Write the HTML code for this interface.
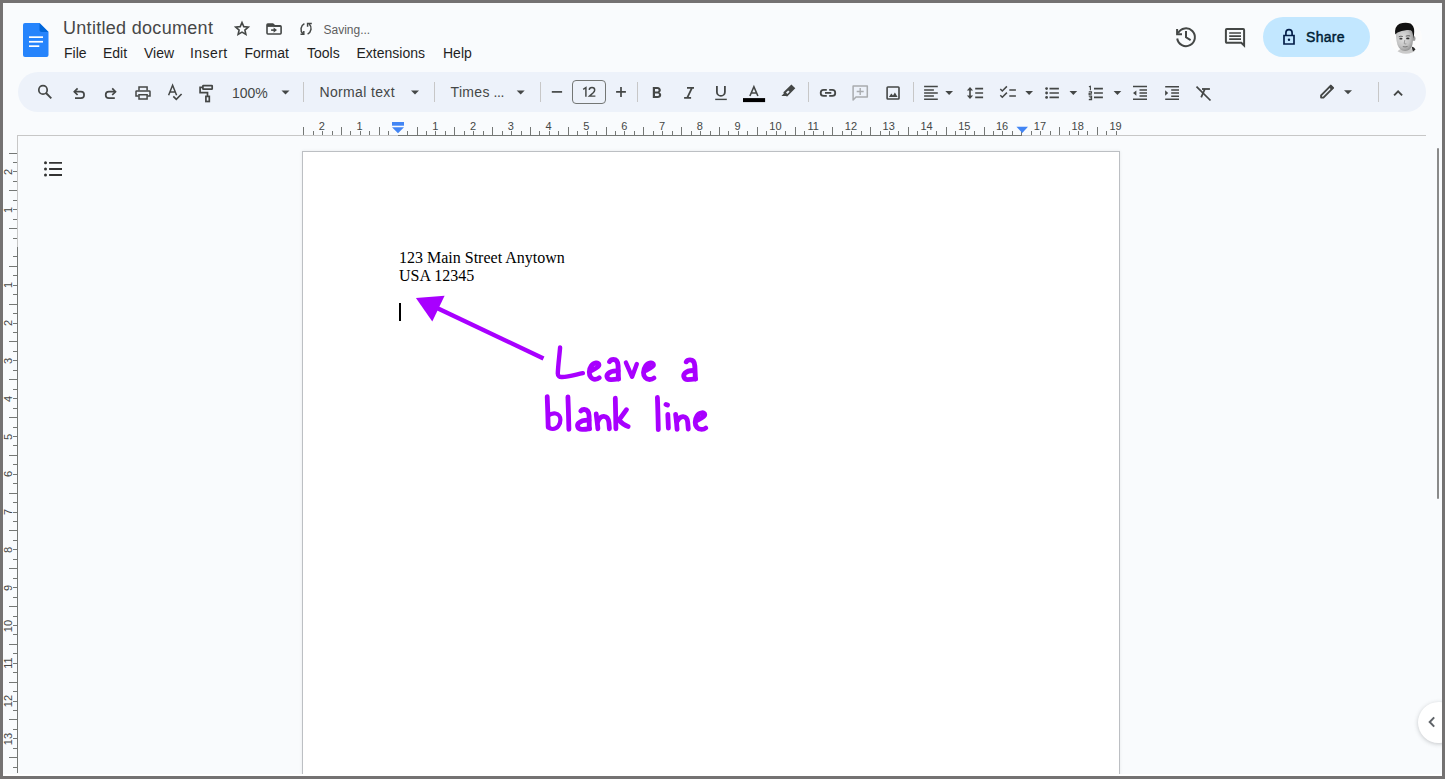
<!DOCTYPE html>
<html><head><meta charset="utf-8">
<style>
*{box-sizing:border-box}
html,body{margin:0;padding:0;width:1445px;height:779px;overflow:hidden;background:#f9fbfd}
#wrap{position:absolute;left:0;top:0;width:1445px;height:779px;overflow:hidden;background:#f9fbfd}
#frame{position:absolute;left:0;top:0;width:1445px;height:779px;border-style:solid;border-color:#747272;border-width:3px 3px 3px 3px;pointer-events:none}
.abs{position:absolute}
.t{position:absolute;font-family:"Liberation Sans",sans-serif;white-space:nowrap;line-height:1}
.menu{font-size:14px;color:#1f1f1f;top:46px}
svg{position:absolute;overflow:visible;left:0;top:0}
.sep{position:absolute;top:82px;width:1px;height:20px;background:#c7c7c7}
.rn{position:absolute;width:20px;text-align:center;font-family:"Liberation Sans",sans-serif;font-size:11px;line-height:1;color:#444746}
.vn{position:absolute;width:20px;height:12px;text-align:center;font-family:"Liberation Sans",sans-serif;font-size:11px;line-height:12px;color:#444746;transform:rotate(-90deg)}
.tk{position:absolute;width:1px;background:#747775}
.tkv{position:absolute;height:1px;background:#747775}
</style></head>
<body>
<div id="wrap">

<!-- docs logo -->
<svg width="1445" height="779" style="left:0;top:0">
  <g transform="translate(23,23)">
  <path d="M2 0 H16.5 L25.5 9 V32 a2 2 0 0 1 -2 2 H2 a2 2 0 0 1 -2 -2 V2 a2 2 0 0 1 2 -2z" fill="#2684fc"/>
  <path d="M16.5 0 L25.5 9 H18.5 a2 2 0 0 1 -2 -2z" fill="#0066da"/>
  <rect x="6" y="13.3" width="14" height="1.7" fill="#fff"/>
  <rect x="6" y="17.9" width="14" height="1.7" fill="#fff"/>
  <rect x="6" y="22.3" width="10.3" height="1.7" fill="#fff"/>
  </g>

  <!-- star -->
  <path d="M242.00 22.50 L243.78 26.64 L248.28 27.06 L244.89 30.04 L245.88 34.44 L242.00 32.14 L238.12 34.44 L239.11 30.04 L235.72 27.06 L240.22 26.64Z" fill="none" stroke="#444746" stroke-width="1.6" stroke-linejoin="miter"/>
  <!-- folder move -->
  <path d="M267 24.9 a0.8 0.8 0 0 1 0.8 -0.8 H272.8 L274.8 25.9 H280.2 a0.9 0.9 0 0 1 0.9 0.9 V33.1 a0.9 0.9 0 0 1 -0.9 0.9 H267.9 a0.9 0.9 0 0 1 -0.9 -0.9 Z" fill="none" stroke="#444746" stroke-width="1.6"/>
  <path d="M267 26.3 H281" stroke="#444746" stroke-width="1.2"/><path d="M267 24 H272.7 L274.8 26.1 H267Z" fill="#444746"/>
  <path d="M271.1 30.1 H274.3" stroke="#444746" stroke-width="1.6"/>
  <path d="M273.6 27.5 L277 30.1 L273.6 32.7 Z" fill="#444746"/>
  <!-- sync -->
  <g fill="none" stroke="#444746" stroke-width="1.5">
  <path d="M304.4 23.6 A6.3 6.3 0 0 0 302.9 33.7"/>
  <path d="M300.5 34.3 H303.8 V31.1"/>
  <path d="M307.6 34.1 A6.3 6.3 0 0 0 309.2 24"/>
  <path d="M311.8 23.5 H307.6 V26.7"/>
  </g>

  <!-- history -->
  <path d="M1178.1 33.1 A8.9 8.9 0 1 1 1177.2 38.5" fill="none" stroke="#444746" stroke-width="2"/>
  <path d="M1177.1 29 V34.3 H1182" fill="none" stroke="#444746" stroke-width="2"/>
  <path d="M1186 30.9 V37.3 L1190.6 40.1" fill="none" stroke="#444746" stroke-width="2"/>
  <!-- comments -->
  <path d="M1226.8 29.1 H1243.2 a0.9 0.9 0 0 1 0.9 0.9 V45.4 L1241.3 42.7 H1226.8 a0.9 0.9 0 0 1 -0.9 -0.9 V30 a0.9 0.9 0 0 1 0.9 -0.9z" fill="none" stroke="#444746" stroke-width="2"/>
  <path d="M1245 43.6 V47.4 L1241.3 43.6Z" fill="#444746"/>
  <path d="M1229.2 33 H1241 M1229.2 36.1 H1241 M1229.2 39.1 H1241" stroke="#444746" stroke-width="1.7"/>

</svg>

<div class="t" style="left:63px;top:19px;font-size:18px;letter-spacing:0.3px;color:#474747">Untitled document</div>

<div class="t menu" style="left:64px">File</div>
<div class="t menu" style="left:103px">Edit</div>
<div class="t menu" style="left:144px">View</div>
<div class="t menu" style="left:190px;letter-spacing:0.45px">Insert</div>
<div class="t menu" style="left:244.5px">Format</div>
<div class="t menu" style="left:307px">Tools</div>
<div class="t menu" style="left:356.5px">Extensions</div>
<div class="t menu" style="left:443px">Help</div>

<div class="t" style="left:323.5px;top:24px;font-size:12px;color:#5e5e5e">Saving...</div>

<!-- share button -->
<div class="abs" style="left:1263px;top:17px;width:107px;height:40px;border-radius:20px;background:#c2e7ff"></div>
<div class="t" style="left:1306px;top:30px;font-size:14px;color:#001d35;letter-spacing:0.3px;-webkit-text-stroke:0.45px #001d35">Share</div>

<svg width="1445" height="779">
  <!-- lock -->
  <path d="M1284 35.5 H1294 V44 H1284 Z" fill="none" stroke="#041e49" stroke-width="1.7"/>
  <path d="M1285.9 35.5 V32.8 A3.1 3.1 0 0 1 1292.1 32.8 V35.5" fill="none" stroke="#041e49" stroke-width="1.7"/>
  <circle cx="1289" cy="39.7" r="1.2" fill="#041e49"/>
</svg>
<!-- avatar -->
<svg width="1445" height="779">
  <defs><clipPath id="av"><circle cx="1406" cy="37.8" r="16"/></clipPath>
  <radialGradient id="fg" cx="0.42" cy="0.4" r="0.65"><stop offset="0" stop-color="#e2e2e2"/><stop offset="0.6" stop-color="#c4c4c4"/><stop offset="1" stop-color="#8f8f8f"/></radialGradient></defs>
  <circle cx="1406" cy="37.8" r="16" fill="#fcfcfc"/>
  <g clip-path="url(#av)">
    <path d="M1395 56 Q1397 50 1402 48.5 L1410 48 Q1415 48.5 1417 56Z" fill="#c9c9c9"/>
    <path d="M1411.5 46.5 Q1414.5 47 1415.5 49.5 L1413 51.5Z" fill="#2a2a2a"/>
    <ellipse cx="1414" cy="38.5" rx="1.5" ry="2.5" fill="#9a9a9a"/>
    <path d="M1396 32 Q1395.8 43 1398.8 47.5 Q1401.8 51.3 1405.5 51 Q1409.8 50.6 1411.8 46.5 Q1413.6 41.5 1413.2 31 Q1405 28 1396 32Z" fill="url(#fg)"/>
    <path d="M1395.2 34.5 Q1394.2 26.5 1399.5 23.8 Q1405.5 21.6 1410.5 23.6 Q1414.3 26 1414.2 31.5 L1413.8 38.5 Q1413 34 1412 31.2 Q1410.5 29.5 1407 30 Q1401 30.8 1397.5 32.5 Q1396.2 33.3 1395.2 34.5Z" fill="#121212"/>
    <path d="M1398.8 36.8 Q1400.8 35.8 1402.8 36.5 M1405.8 36.2 Q1408 35.3 1410.2 36" stroke="#555" stroke-width="0.9" fill="none"/>
    <ellipse cx="1400.9" cy="38.7" rx="1.6" ry="0.9" fill="#3d3d3d"/>
    <ellipse cx="1407.8" cy="38.4" rx="1.7" ry="0.95" fill="#2f2f2f"/>
    <path d="M1404.8 40 L1404.2 43.5 Q1405 44.3 1406.3 43.8" stroke="#8a8a8a" stroke-width="0.8" fill="none"/>
    <path d="M1402.8 46.6 Q1405 47.3 1407.5 46.5" stroke="#6e6e6e" stroke-width="0.9" fill="none"/>
  </g>
</svg>

<!-- toolbar -->
<div class="abs" style="left:18px;top:72px;width:1408px;height:40px;border-radius:20px;background:#edf2fa"></div>
<div class="t" style="left:232px;top:86px;font-size:14px;color:#444746">100%</div>
<div class="t" style="left:319.5px;top:85px;font-size:14px;color:#444746;letter-spacing:0.35px">Normal text</div>
<div class="t" style="left:450.5px;top:85px;font-size:14px;color:#444746;letter-spacing:0.35px">Times<span style="letter-spacing:-0.3px"> ...</span></div>
<div class="abs" style="left:572px;top:80px;width:34px;height:24px;border:1px solid #747775;border-radius:4px"></div>
<svg width="1445" height="779"><path d="M583.2 89.3 L585.9 87.6 V96.8 M589.2 89.9 C589.3 88.3 590.4 87.5 592 87.5 C593.6 87.5 594.7 88.5 594.7 90 C594.7 91.1 594.1 91.9 593.2 92.8 L589.5 96.1 H595.4" fill="none" stroke="#444746" stroke-width="1.45"/></svg>
<div class="sep" style="left:303px"></div>
<div class="sep" style="left:434px"></div>
<div class="sep" style="left:540px"></div>
<div class="sep" style="left:637px"></div>
<div class="sep" style="left:808px"></div>
<div class="sep" style="left:913px"></div>
<div class="sep" style="left:1378px"></div>

<svg width="1445" height="779">
 <g fill="none" stroke="#444746" stroke-width="1.7">
  <!-- search -->
  <circle cx="43" cy="89.9" r="4.2"/>
  <path d="M46 93 L51.3 98.3" stroke-width="1.9"/>
  <!-- undo -->
  <path d="M75 98.1 H80.9 A3.2 3.2 0 0 0 80.9 91.7 H74.5"/>
  <path d="M77.6 88.4 L74.3 91.7 L77.6 95"/>
  <!-- redo -->
  <path d="M114.8 98.1 H108.9 A3.2 3.2 0 0 1 108.9 91.7 H115.3"/>
  <path d="M112.2 88.4 L115.5 91.7 L112.2 95"/>
  <!-- print -->
  <path d="M139 90.4 V87 H147.1 V90.4" stroke-width="1.5"/>
  <path d="M138.6 95.9 H136 V91.6 a0.7 0.7 0 0 1 0.7 -0.7 H149.3 a0.7 0.7 0 0 1 0.7 0.7 V95.9 H147.5" stroke-width="1.5"/>
  <path d="M139 94.7 H147.1 V99 H139 Z" stroke-width="1.5"/>
  <!-- spellcheck -->
  <path d="M168.6 95.2 L172.6 85.2 L176.6 95.2 M169.9 92 H175.3" stroke-width="1.5"/>
  <path d="M173.3 96.4 L176.3 99.4 L181.6 94" stroke-width="1.6"/>
  <!-- paint format -->
  <rect x="202.9" y="85.6" width="9.3" height="3.6" rx="0.5"/>
  <path d="M202.9 87.4 H200.1 V92.6 H207.5 V96.4"/>
  <rect x="205.9" y="96.4" width="3.4" height="5.1"/>
  <!-- dropdown arrows -->
 </g>
 <g fill="#444746">
  <path d="M281.5 90.5 H289.5 L285.5 94.5Z"/>
  <path d="M411 90.5 H419 L415 94.5Z"/>
  <path d="M516.7 90.5 H524.7 L520.7 94.5Z"/>
  <path d="M945.3 90.9 H953 L949.15 94.9Z"/>
  <path d="M1025.3 90.9 H1033 L1029.15 94.9Z"/>
  <path d="M1069.5 90.9 H1077.2 L1073.35 94.9Z"/>
  <path d="M1113.6 90.9 H1121.3 L1117.45 94.9Z"/>
  <path d="M1344 90.2 H1352 L1348 94.2Z"/>
 </g>
 <g fill="none" stroke="#444746" stroke-width="1.7">
  <!-- minus plus -->
  <path d="M551.8 91.9 H562.1"/>
  <path d="M616.1 91.9 H625.9 M621 87 V97"/>
  <!-- italic -->
  <path d="M687 87.9 H694 M684.1 97.9 H691.1 M692 87.9 L687.2 97.9" stroke-width="1.8"/>
  <!-- underline -->
  <path d="M716.9 86 V91.9 A4 4 0 0 0 724.9 91.9 V86" stroke-width="1.8"/>
  <path d="M715.2 99.4 H726.8" stroke-width="1.4"/>
  <!-- A text color -->
  <path d="M749.9 96 L753.9 86.8 L757.9 96 M751.3 93 H756.5" stroke-width="1.6"/>
 </g>
 <!-- bold B -->
 <path fill="#444746" d="M652.8 87 H657.3 C659.7 87 660.8 88.4 660.8 90.1 C660.8 91.1 660.3 92 659.4 92.4 C660.6 92.8 661.2 93.9 661.2 95.1 C661.2 97 659.8 98.1 657.6 98.1 H652.8 Z M655 89 V91.6 H657 C658 91.6 658.6 91.1 658.6 90.3 C658.6 89.5 658 89 657.1 89 Z M655 93.5 V96.1 H657.3 C658.4 96.1 659 95.5 659 94.8 C659 94 658.4 93.5 657.3 93.5 Z"/>
 <!-- color bar -->
 <rect x="743" y="98.1" width="22.1" height="4" fill="#000"/>
 <!-- highlighter -->
 <path fill="#444746" d="M791.4 84.4 L795.3 88.3 L787.2 96.4 L785.8 96 L781.4 96 L783.8 93.6 L783.4 92.3 Z"/>
 <path fill="#edf2fa" d="M786 92.6 L788.2 90.4 L789.6 91.8 L787.4 94 Z"/>
 <!-- link -->
 <g fill="none" stroke="#444746" stroke-width="1.8">
  <path d="M826.8 89.95 H823.65 A2.95 2.95 0 0 0 823.65 95.85 H826.8"/>
  <path d="M829.2 89.95 H832.3 A2.95 2.95 0 0 1 832.3 95.85 H829.2"/>
  <path d="M825 92.9 H831.3"/>
 </g>
 <!-- add comment disabled -->
 <g fill="none" stroke="#a9acaf" stroke-width="1.5">
  <path d="M853.1 86 H867.3 V97 H856 L853.1 100 Z" stroke-linejoin="round"/>
  <path d="M856.7 91.5 H863.7 M860.2 88 V95" stroke-width="1.4"/>
 </g>
 <!-- image -->
 <g fill="none" stroke="#444746" stroke-width="1.8">
  <rect x="887.1" y="87" width="11.9" height="12" rx="0.8" stroke-width="1.6"/>
 </g>
 <path fill="#444746" d="M888.9 96.9 L891.3 93.4 L893 95.4 L894.9 92.6 L897.6 96.9 Z"/>
 <g fill="none" stroke="#444746" stroke-width="1.5">
  <!-- align left -->
  <path d="M924.1 86.6 H937.8 M924.1 89.9 H933.9 M924.1 93 H937.8 M924.1 96.1 H933.9 M924.1 99.3 H937.8"/>
  <!-- line spacing -->
  <path d="M970 88.5 V97.5" stroke-width="1.6"/>
  <path d="M975.2 88.6 H983.1 M975.2 93 H983.1 M975.2 97.4 H983.1" stroke-width="1.6"/>
  <!-- checklist -->
  <path d="M1000.3 89 L1002.3 91 L1006.9 86.4 M1000.3 95.2 L1002.3 97.2 L1006.9 92.6" stroke-width="1.5"/>
  <path d="M1009.3 89.9 H1015.9 M1009.3 95.9 H1015.9" stroke-width="1.5"/>
  <!-- bullets -->
  <path d="M1049.5 88.6 H1058.9 M1049.5 93 H1058.9 M1049.5 97.4 H1058.9" stroke-width="1.6"/>
  <!-- numbered -->
  <path d="M1094 88.6 H1102.9 M1094 93 H1102.9 M1094 97.4 H1102.9" stroke-width="1.6"/>
  <path d="M1088.9 86.8 L1090.4 86.2 V90.3 M1088.8 91.7 H1091.5 V93.2 H1089.1 V94.8 H1091.8 M1088.8 96.2 H1091.6 V99.6 H1088.8 M1089.6 97.9 H1091.6" stroke-width="1.1"/>
  <!-- decrease indent -->
  <path d="M1133 86.6 H1147 M1139.5 89.9 H1147 M1139.5 93 H1147 M1139.5 96.1 H1147 M1133 99.3 H1147"/>
  <!-- increase indent -->
  <path d="M1165.2 86.7 H1179 M1171.2 89.9 H1179 M1171.2 93 H1179 M1171.2 96.2 H1179 M1165.2 99.2 H1179"/>
  <!-- clear formatting -->
  <path d="M1196.5 86.6 L1210.5 100.5" stroke-width="1.7"/>
  <path d="M1202 89 H1209.9" stroke-width="1.8"/>
  <path d="M1204.8 89.2 L1201.2 97.4" stroke-width="1.8"/>
  <!-- chevron up -->
  <path d="M1394.1 95.3 L1398.1 91.3 L1402.1 95.3" stroke-width="1.9"/>
 </g>
 <g fill="#444746">
  <path d="M966.9 90.5 L970 87 L973.1 90.5Z M966.9 95.5 L970 99 L973.1 95.5Z"/>
  <circle cx="1046.6" cy="88.6" r="1.4"/><circle cx="1046.6" cy="93" r="1.4"/><circle cx="1046.6" cy="97.4" r="1.4"/>
  <path d="M1136.4 90.4 V95.8 L1133 93.1Z"/>
  <path d="M1165.1 90.2 V95.7 L1168.2 92.95Z"/>
  <!-- pencil -->
  <path d="M1330.8 85.6 L1333.1 87.9 L1323.4 97.6 L1321.1 97.6 L1321.1 95.3 Z" fill="none" stroke="#444746" stroke-width="1.9" stroke-linejoin="round"/>
  <path d="M1330.8 84.9 L1333.8 87.9 L1331.6 90.1 L1328.6 87.1Z" fill="#444746"/>
 </g>
 
</svg>

<!-- ruler lines -->
<div class="abs" style="left:17px;top:135px;width:1409px;height:1px;background:#c7c7c7"></div>
<div class="abs" style="left:398px;top:135px;width:624px;height:1px;background:#747775"></div>
<div class="abs" style="left:17px;top:135px;width:1px;height:638px;background:#c7c7c7"></div>
<div class="abs" style="left:17px;top:247px;width:1px;height:526px;background:#747775"></div>

<div class="tk" style="left:303px;top:127px;height:8px"></div>
<div class="tk" style="left:313px;top:131px;height:4px"></div>
<div class="rn" style="left:311.8px;top:121px">2</div>
<div class="tk" style="left:322px;top:131px;height:4px"></div>
<div class="tk" style="left:332px;top:131px;height:4px"></div>
<div class="tk" style="left:341px;top:127px;height:8px"></div>
<div class="tk" style="left:350px;top:131px;height:4px"></div>
<div class="rn" style="left:349.6px;top:121px">1</div>
<div class="tk" style="left:360px;top:131px;height:4px"></div>
<div class="tk" style="left:369px;top:131px;height:4px"></div>
<div class="tk" style="left:379px;top:127px;height:8px"></div>
<div class="tk" style="left:388px;top:131px;height:4px"></div>
<div class="tk" style="left:407px;top:131px;height:4px"></div>
<div class="tk" style="left:417px;top:127px;height:8px"></div>
<div class="tk" style="left:426px;top:131px;height:4px"></div>
<div class="rn" style="left:425.2px;top:121px">1</div>
<div class="tk" style="left:435px;top:131px;height:4px"></div>
<div class="tk" style="left:445px;top:131px;height:4px"></div>
<div class="tk" style="left:454px;top:127px;height:8px"></div>
<div class="tk" style="left:464px;top:131px;height:4px"></div>
<div class="rn" style="left:463.0px;top:121px">2</div>
<div class="tk" style="left:473px;top:131px;height:4px"></div>
<div class="tk" style="left:483px;top:131px;height:4px"></div>
<div class="tk" style="left:492px;top:127px;height:8px"></div>
<div class="tk" style="left:502px;top:131px;height:4px"></div>
<div class="rn" style="left:500.8px;top:121px">3</div>
<div class="tk" style="left:511px;top:131px;height:4px"></div>
<div class="tk" style="left:521px;top:131px;height:4px"></div>
<div class="tk" style="left:530px;top:127px;height:8px"></div>
<div class="tk" style="left:539px;top:131px;height:4px"></div>
<div class="rn" style="left:538.6px;top:121px">4</div>
<div class="tk" style="left:549px;top:131px;height:4px"></div>
<div class="tk" style="left:558px;top:131px;height:4px"></div>
<div class="tk" style="left:568px;top:127px;height:8px"></div>
<div class="tk" style="left:577px;top:131px;height:4px"></div>
<div class="rn" style="left:576.4px;top:121px">5</div>
<div class="tk" style="left:587px;top:131px;height:4px"></div>
<div class="tk" style="left:596px;top:131px;height:4px"></div>
<div class="tk" style="left:606px;top:127px;height:8px"></div>
<div class="tk" style="left:615px;top:131px;height:4px"></div>
<div class="rn" style="left:614.2px;top:121px">6</div>
<div class="tk" style="left:624px;top:131px;height:4px"></div>
<div class="tk" style="left:634px;top:131px;height:4px"></div>
<div class="tk" style="left:643px;top:127px;height:8px"></div>
<div class="tk" style="left:653px;top:131px;height:4px"></div>
<div class="rn" style="left:652.0px;top:121px">7</div>
<div class="tk" style="left:662px;top:131px;height:4px"></div>
<div class="tk" style="left:672px;top:131px;height:4px"></div>
<div class="tk" style="left:681px;top:127px;height:8px"></div>
<div class="tk" style="left:691px;top:131px;height:4px"></div>
<div class="rn" style="left:689.8px;top:121px">8</div>
<div class="tk" style="left:700px;top:131px;height:4px"></div>
<div class="tk" style="left:710px;top:131px;height:4px"></div>
<div class="tk" style="left:719px;top:127px;height:8px"></div>
<div class="tk" style="left:728px;top:131px;height:4px"></div>
<div class="rn" style="left:727.6px;top:121px">9</div>
<div class="tk" style="left:738px;top:131px;height:4px"></div>
<div class="tk" style="left:747px;top:131px;height:4px"></div>
<div class="tk" style="left:757px;top:127px;height:8px"></div>
<div class="tk" style="left:766px;top:131px;height:4px"></div>
<div class="rn" style="left:765.4px;top:121px">10</div>
<div class="tk" style="left:776px;top:131px;height:4px"></div>
<div class="tk" style="left:785px;top:131px;height:4px"></div>
<div class="tk" style="left:795px;top:127px;height:8px"></div>
<div class="tk" style="left:804px;top:131px;height:4px"></div>
<div class="rn" style="left:803.1px;top:121px">11</div>
<div class="tk" style="left:813px;top:131px;height:4px"></div>
<div class="tk" style="left:823px;top:131px;height:4px"></div>
<div class="tk" style="left:832px;top:127px;height:8px"></div>
<div class="tk" style="left:842px;top:131px;height:4px"></div>
<div class="rn" style="left:840.9px;top:121px">12</div>
<div class="tk" style="left:851px;top:131px;height:4px"></div>
<div class="tk" style="left:861px;top:131px;height:4px"></div>
<div class="tk" style="left:870px;top:127px;height:8px"></div>
<div class="tk" style="left:880px;top:131px;height:4px"></div>
<div class="rn" style="left:878.7px;top:121px">13</div>
<div class="tk" style="left:889px;top:131px;height:4px"></div>
<div class="tk" style="left:898px;top:131px;height:4px"></div>
<div class="tk" style="left:908px;top:127px;height:8px"></div>
<div class="tk" style="left:917px;top:131px;height:4px"></div>
<div class="rn" style="left:916.5px;top:121px">14</div>
<div class="tk" style="left:927px;top:131px;height:4px"></div>
<div class="tk" style="left:936px;top:131px;height:4px"></div>
<div class="tk" style="left:946px;top:127px;height:8px"></div>
<div class="tk" style="left:955px;top:131px;height:4px"></div>
<div class="rn" style="left:954.3px;top:121px">15</div>
<div class="tk" style="left:965px;top:131px;height:4px"></div>
<div class="tk" style="left:974px;top:131px;height:4px"></div>
<div class="tk" style="left:984px;top:127px;height:8px"></div>
<div class="tk" style="left:993px;top:131px;height:4px"></div>
<div class="rn" style="left:992.1px;top:121px">16</div>
<div class="tk" style="left:1002px;top:131px;height:4px"></div>
<div class="tk" style="left:1012px;top:131px;height:4px"></div>
<div class="tk" style="left:1021px;top:127px;height:8px"></div>
<div class="tk" style="left:1031px;top:131px;height:4px"></div>
<div class="rn" style="left:1029.9px;top:121px">17</div>
<div class="tk" style="left:1040px;top:131px;height:4px"></div>
<div class="tk" style="left:1050px;top:131px;height:4px"></div>
<div class="tk" style="left:1059px;top:127px;height:8px"></div>
<div class="tk" style="left:1069px;top:131px;height:4px"></div>
<div class="rn" style="left:1067.7px;top:121px">18</div>
<div class="tk" style="left:1078px;top:131px;height:4px"></div>
<div class="tk" style="left:1087px;top:131px;height:4px"></div>
<div class="tk" style="left:1097px;top:127px;height:8px"></div>
<div class="tk" style="left:1106px;top:131px;height:4px"></div>
<div class="rn" style="left:1105.5px;top:121px">19</div>
<div class="tk" style="left:1116px;top:131px;height:4px"></div>
<div class="tkv" style="left:9px;top:153px;width:8px"></div>
<div class="tkv" style="left:13px;top:162px;width:4px"></div>
<div class="vn" style="left:-2px;top:165.9px">2</div>
<div class="tkv" style="left:13px;top:171px;width:4px"></div>
<div class="tkv" style="left:13px;top:181px;width:4px"></div>
<div class="tkv" style="left:9px;top:190px;width:8px"></div>
<div class="tkv" style="left:13px;top:200px;width:4px"></div>
<div class="vn" style="left:-2px;top:203.7px">1</div>
<div class="tkv" style="left:13px;top:209px;width:4px"></div>
<div class="tkv" style="left:13px;top:219px;width:4px"></div>
<div class="tkv" style="left:9px;top:228px;width:8px"></div>
<div class="tkv" style="left:13px;top:238px;width:4px"></div>
<div class="tkv" style="left:13px;top:256px;width:4px"></div>
<div class="tkv" style="left:9px;top:266px;width:8px"></div>
<div class="tkv" style="left:13px;top:275px;width:4px"></div>
<div class="vn" style="left:-2px;top:279.3px">1</div>
<div class="tkv" style="left:13px;top:285px;width:4px"></div>
<div class="tkv" style="left:13px;top:294px;width:4px"></div>
<div class="tkv" style="left:9px;top:304px;width:8px"></div>
<div class="tkv" style="left:13px;top:313px;width:4px"></div>
<div class="vn" style="left:-2px;top:317.1px">2</div>
<div class="tkv" style="left:13px;top:323px;width:4px"></div>
<div class="tkv" style="left:13px;top:332px;width:4px"></div>
<div class="tkv" style="left:9px;top:341px;width:8px"></div>
<div class="tkv" style="left:13px;top:351px;width:4px"></div>
<div class="vn" style="left:-2px;top:354.9px">3</div>
<div class="tkv" style="left:13px;top:360px;width:4px"></div>
<div class="tkv" style="left:13px;top:370px;width:4px"></div>
<div class="tkv" style="left:9px;top:379px;width:8px"></div>
<div class="tkv" style="left:13px;top:389px;width:4px"></div>
<div class="vn" style="left:-2px;top:392.7px">4</div>
<div class="tkv" style="left:13px;top:398px;width:4px"></div>
<div class="tkv" style="left:13px;top:408px;width:4px"></div>
<div class="tkv" style="left:9px;top:417px;width:8px"></div>
<div class="tkv" style="left:13px;top:427px;width:4px"></div>
<div class="vn" style="left:-2px;top:430.5px">5</div>
<div class="tkv" style="left:13px;top:436px;width:4px"></div>
<div class="tkv" style="left:13px;top:445px;width:4px"></div>
<div class="tkv" style="left:9px;top:455px;width:8px"></div>
<div class="tkv" style="left:13px;top:464px;width:4px"></div>
<div class="vn" style="left:-2px;top:468.3px">6</div>
<div class="tkv" style="left:13px;top:474px;width:4px"></div>
<div class="tkv" style="left:13px;top:483px;width:4px"></div>
<div class="tkv" style="left:9px;top:493px;width:8px"></div>
<div class="tkv" style="left:13px;top:502px;width:4px"></div>
<div class="vn" style="left:-2px;top:506.1px">7</div>
<div class="tkv" style="left:13px;top:512px;width:4px"></div>
<div class="tkv" style="left:13px;top:521px;width:4px"></div>
<div class="tkv" style="left:9px;top:530px;width:8px"></div>
<div class="tkv" style="left:13px;top:540px;width:4px"></div>
<div class="vn" style="left:-2px;top:543.9px">8</div>
<div class="tkv" style="left:13px;top:549px;width:4px"></div>
<div class="tkv" style="left:13px;top:559px;width:4px"></div>
<div class="tkv" style="left:9px;top:568px;width:8px"></div>
<div class="tkv" style="left:13px;top:578px;width:4px"></div>
<div class="vn" style="left:-2px;top:581.7px">9</div>
<div class="tkv" style="left:13px;top:587px;width:4px"></div>
<div class="tkv" style="left:13px;top:597px;width:4px"></div>
<div class="tkv" style="left:9px;top:606px;width:8px"></div>
<div class="tkv" style="left:13px;top:616px;width:4px"></div>
<div class="vn" style="left:-2px;top:619.5px">10</div>
<div class="tkv" style="left:13px;top:625px;width:4px"></div>
<div class="tkv" style="left:13px;top:634px;width:4px"></div>
<div class="tkv" style="left:9px;top:644px;width:8px"></div>
<div class="tkv" style="left:13px;top:653px;width:4px"></div>
<div class="vn" style="left:-2px;top:657.2px">11</div>
<div class="tkv" style="left:13px;top:663px;width:4px"></div>
<div class="tkv" style="left:13px;top:672px;width:4px"></div>
<div class="tkv" style="left:9px;top:682px;width:8px"></div>
<div class="tkv" style="left:13px;top:691px;width:4px"></div>
<div class="vn" style="left:-2px;top:695.0px">12</div>
<div class="tkv" style="left:13px;top:701px;width:4px"></div>
<div class="tkv" style="left:13px;top:710px;width:4px"></div>
<div class="tkv" style="left:9px;top:719px;width:8px"></div>
<div class="tkv" style="left:13px;top:729px;width:4px"></div>
<div class="vn" style="left:-2px;top:732.8px">13</div>
<div class="tkv" style="left:13px;top:738px;width:4px"></div>
<div class="tkv" style="left:13px;top:748px;width:4px"></div>
<div class="tkv" style="left:9px;top:757px;width:8px"></div>
<div class="tkv" style="left:13px;top:767px;width:4px"></div>

<!-- indent markers -->
<svg width="1445" height="779">
  <rect x="392" y="122" width="12" height="3.7" fill="#4285f4"/>
  <path d="M392 127.2 H404 L398 133.3Z" fill="#4285f4"/>
  <path d="M1016.5 126.8 H1028 L1022.25 133Z" fill="#4285f4"/>
</svg>

<!-- outline icon -->
<svg width="1445" height="779">
  <g fill="#333"><circle cx="45.5" cy="162.8" r="1.5"/><circle cx="45.5" cy="169" r="1.5"/><circle cx="45.5" cy="175" r="1.5"/></g>
  <path d="M49.1 162.8 H62 M49.1 169 H62 M49.1 175 H62" stroke="#333" stroke-width="1.8"/>
</svg>

<!-- page -->
<div class="abs" style="left:302px;top:151px;width:818px;height:700px;background:#fff;border:1px solid #bcbfc3;box-shadow:0 0 3px rgba(60,64,67,0.10)"></div>

<div class="abs" style="left:399px;top:249px;font-family:'Liberation Serif',serif;font-size:16px;line-height:18px;color:#000;white-space:nowrap">123 Main Street Anytown<br>USA 12345</div>
<div class="abs" style="left:399px;top:303px;width:2px;height:18px;background:#000"></div>

<!-- annotation -->
<svg width="1445" height="779">
 <path d="M437 308 L543.5 358.5" stroke="#a800ff" stroke-width="4.4" fill="none"/>
 <path d="M415.9 297.9 L444.6 295.7 L432.3 321.6 Z" fill="#a800ff"/>
 <g fill="none" stroke="#a800ff" stroke-width="4.4" stroke-linecap="round" stroke-linejoin="round">
  <path d="M560.1 347.5 C559.5 355 558 366 557.8 373.5 C557.8 376 559.5 377.2 562 377 C569 376.5 576 374.5 582.9 373.2"/>
  <path d="M591.5 370.5 C594.5 369 599 367 599 365 C599 363.2 597.5 362.8 596 363 C592 363.5 589.5 367.5 589.3 372 C589.2 376 591.5 379.3 595 379.3 C596.8 379.3 598.3 378.7 599.3 377.8" stroke-width="4.8"/>
  <path d="M609.6 361.6 C610.5 360 612 359.5 613.5 359.5 C616.5 359.5 617.9 362.3 618.1 366 L618.4 379" stroke-width="4.9"/>
  <path d="M618 371 C614.2 370.7 610.3 371.3 608 373.7 C606 375.7 607 379.4 610.7 379.6 C613 379.7 616 379.3 618.4 378.9" stroke-width="4.9"/>
  <path d="M625.9 362.6 L632.1 376.8 L636.8 364.1"/>
  <path d="M645.5 370.5 C648.5 369 653.5 367 653.5 365 C653.5 363.3 652 362.8 650.5 363 C646.5 363.5 643.6 368 643.5 372.5 C643.4 376.5 646 379.5 649.5 379.5 C651.5 379.5 653 378.8 654 378" stroke-width="4.8"/>
  <path d="M686.3 361.8 C687 360.5 688.5 359.9 690 359.9 C693 359.9 694.6 362.5 694.8 366 L695.4 379" stroke-width="4.9"/>
  <path d="M694.5 370.6 C691 370.4 687.2 371 684.8 373.3 C682.8 375.5 683.8 379.6 687.6 379.6 C690 379.6 693 379.2 695.4 378.8" stroke-width="4.9"/>

  <path d="M547.2 396.6 C547.6 406 548 418 548.2 427.3" stroke-width="4.8"/>
  <path d="M548.5 415.5 C550.5 413.8 553 413.2 555.5 413.5 C558.7 414 560.4 416.7 560.4 419.7 C560.4 424.2 557.7 428.9 552.7 429 C550.7 429 549.2 428.2 548.5 426.7" stroke-width="4.2"/>
  <path d="M567.9 396.9 C568.3 407 568.7 420 568.9 429.4" stroke-width="4.8"/>
  <path d="M580.8 411 C581.8 409.8 583 409.4 584.3 409.5 C587.5 409.8 589 412.5 589.1 416 L589.3 428.8" stroke-width="4.8"/>
  <path d="M589 420.2 C585.5 420 581.5 420.5 578.7 423 C576.5 425.3 577.5 429.3 582.1 429.4 C584.5 429.5 587.5 429 589.5 428.6" stroke-width="4.8"/>
  <path d="M596.2 414 C596.8 419 597.5 424 597.9 428.8" stroke-width="4.8"/>
  <path d="M597.8 421.5 C599 418.5 601.5 416.2 603.8 416.3 C606.5 416.5 608.5 419 608.9 422.5 L609.4 428.8" stroke-width="4.8"/>
  <path d="M615.3 398.2 C615.5 408 615.8 419 615.9 428.8" stroke-width="4.8"/>
  <path d="M626.5 409.7 L618.9 420.2 C621 422.5 624.5 425.5 628.1 426.5" stroke-width="4.8"/>
  <path d="M657.4 397.5 C657.8 407 658.1 419 658.3 429.6" stroke-width="4.8"/>
  <path d="M666 404.4 L667.5 405" stroke-width="4.8"/>
  <path d="M667.8 414.3 L668.4 428.1" stroke-width="4.8"/>
  <path d="M675.6 414.3 C676.2 419 676.8 424 677.1 429.3" stroke-width="4.8"/>
  <path d="M677 421.5 C678.5 418.5 681 416.5 683.1 416.6 C686 416.8 687.5 419.5 687.7 422.4 L688.3 429" stroke-width="4.8"/>
  <path d="M697 420.5 C700 419 704.8 417 704.8 414.8 C704.8 413 703.3 412.6 701.8 412.8 C697.5 413.4 695.3 417.5 695.2 422.2 C695.1 426.5 697.8 429.4 701.5 429.4 C703.3 429.4 704.8 428.8 705.8 428" stroke-width="4.8"/>
 </g>
</svg>

<div class="abs" style="left:0;top:774px;width:1445px;height:2px;background:#fff"></div>
<!-- scrollbar -->
<div class="abs" style="left:1437px;top:148px;width:2px;height:351px;background:#8a8a8a;border-radius:1px"></div>
<!-- side panel toggle -->
<div class="abs" style="left:1418px;top:701.5px;width:42px;height:41px;border-radius:21px;background:#fff;box-shadow:0 1px 4px rgba(60,64,67,0.28)"></div>
<svg width="1445" height="779">
  <path d="M1434.2 717.4 L1429.7 722 L1434.2 726.6" fill="none" stroke="#5f6368" stroke-width="2"/>
</svg>

</div>
<div id="frame"></div>
</body></html>
